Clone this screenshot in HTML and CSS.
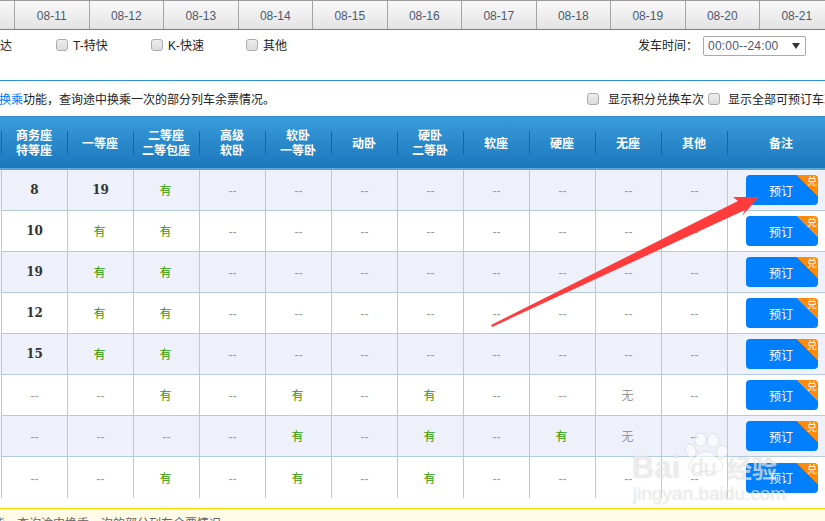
FILE: index.html
```html
<!DOCTYPE html>
<html lang="zh-CN">
<head>
<meta charset="utf-8">
<title>余票查询</title>
<link rel="stylesheet" href="styles.css">
</head>
<body>
<div class="page">
  <nav class="dates">
    <span class="date date-cut"></span>
    <span class="date">08-11</span><span class="date">08-12</span><span class="date">08-13</span><span class="date">08-14</span><span class="date">08-15</span><span class="date">08-16</span><span class="date">08-17</span><span class="date">08-18</span><span class="date">08-19</span><span class="date">08-20</span><span class="date">08-21</span>
  </nav>
  <section class="filters">
    <span class="filter-first">达</span>
    <label class="filter"><input type="checkbox" class="check">T-特快</label>
    <label class="filter"><input type="checkbox" class="check">K-快速</label>
    <label class="filter"><input type="checkbox" class="check">其他</label>
    <div class="time">
      <span>发车时间：</span>
      <div class="select">00:00--24:00<i class="caret"></i></div>
    </div>
  </section>
  <section class="notice">
    <p class="notice-text"><a class="link">换乘</a>功能，查询途中换乘一次的部分列车余票情况。</p>
    <label class="notice-opt"><input type="checkbox" class="check">显示积分兑换车次</label>
    <label class="notice-opt notice-opt-b"><input type="checkbox" class="check">显示全部可预订车次</label>
  </section>
  <table class="grid">
    <thead>
      <tr>
        <th class="cut"></th>
        <th>商务座<br>特等座</th><th>一等座</th><th>二等座<br>二等包座</th><th>高级<br>软卧</th><th>软卧<br>一等卧</th><th>动卧</th><th>硬卧<br>二等卧</th><th>软座</th><th>硬座</th><th>无座</th><th>其他</th><th class="last">备注</th>
      </tr>
    </thead>
    <tbody>
      <tr><td class="cut"></td><td class="num">8</td><td class="num">19</td><td class="yes">有</td><td>--</td><td>--</td><td>--</td><td>--</td><td>--</td><td>--</td><td>--</td><td>--</td><td class="last"><button class="book">预订<span class="tag">兑</span></button></td></tr>
      <tr><td class="cut"></td><td class="num">10</td><td class="yes">有</td><td class="yes">有</td><td>--</td><td>--</td><td>--</td><td>--</td><td>--</td><td>--</td><td>--</td><td>--</td><td class="last"><button class="book">预订<span class="tag">兑</span></button></td></tr>
      <tr><td class="cut"></td><td class="num">19</td><td class="yes">有</td><td class="yes">有</td><td>--</td><td>--</td><td>--</td><td>--</td><td>--</td><td>--</td><td>--</td><td>--</td><td class="last"><button class="book">预订<span class="tag">兑</span></button></td></tr>
      <tr><td class="cut"></td><td class="num">12</td><td class="yes">有</td><td class="yes">有</td><td>--</td><td>--</td><td>--</td><td>--</td><td>--</td><td>--</td><td>--</td><td>--</td><td class="last"><button class="book">预订<span class="tag">兑</span></button></td></tr>
      <tr><td class="cut"></td><td class="num">15</td><td class="yes">有</td><td class="yes">有</td><td>--</td><td>--</td><td>--</td><td>--</td><td>--</td><td>--</td><td>--</td><td>--</td><td class="last"><button class="book">预订<span class="tag">兑</span></button></td></tr>
      <tr><td class="cut"></td><td>--</td><td>--</td><td class="yes">有</td><td>--</td><td class="yes">有</td><td>--</td><td class="yes">有</td><td>--</td><td>--</td><td class="no">无</td><td>--</td><td class="last"><button class="book">预订<span class="tag">兑</span></button></td></tr>
      <tr><td class="cut"></td><td>--</td><td>--</td><td>--</td><td>--</td><td class="yes">有</td><td>--</td><td class="yes">有</td><td>--</td><td class="yes">有</td><td class="no">无</td><td>--</td><td class="last"><button class="book">预订<span class="tag">兑</span></button></td></tr>
      <tr><td class="cut"></td><td>--</td><td>--</td><td class="yes">有</td><td>--</td><td class="yes">有</td><td>--</td><td class="yes">有</td><td>--</td><td>--</td><td>--</td><td>--</td><td class="last"><button class="book">预订<span class="tag">兑</span></button></td></tr>
    </tbody>
  </table>
  <footer class="tip">功能，查询途中换乘一次的部分列车余票情况。</footer>

  <svg class="arrow" width="825" height="521" viewBox="0 0 825 521" aria-hidden="true">
    <polygon points="491,325 738,201 733,197 759,197 742,216 745,210 492,327" fill="#ff3b3b"/>
  </svg>

  <div class="mark" aria-hidden="true">
    <svg class="paw" width="46" height="42" viewBox="0 0 60 62" preserveAspectRatio="none">
      <g fill="#ffffff" fill-opacity=".6" stroke="#9a9a9a" stroke-opacity=".3" stroke-width="1">
        <ellipse cx="10" cy="26" rx="7" ry="10" transform="rotate(-12 10 26)"/>
        <ellipse cx="23" cy="10" rx="7.5" ry="10"/>
        <ellipse cx="39" cy="11" rx="7.5" ry="10"/>
        <ellipse cx="51" cy="28" rx="7" ry="10" transform="rotate(12 51 28)"/>
        <path d="M30 27c9 0 13 9 19 15 6 7 1 16-8 16-5 0-7-2-11-2s-7 2-12 2c-9 0-13-9-8-16 6-6 11-15 20-15z"/>
      </g>
    </svg>
    <span class="mark-bai">Bai</span>
    <span class="mark-du">du</span>
    <span class="mark-jy">经验</span>
    <span class="mark-url">jingyan.baidu.com</span>
  </div>
</div>
</body>
</html>
```
FILE: styles.css
```css
* { box-sizing: border-box; }
html, body { margin: 0; padding: 0; background: #fff; }
.page {
  position: relative;
  width: 825px;
  height: 521px;
  overflow: hidden;
  font: 12px/16px "Liberation Sans", "Noto Sans CJK SC", sans-serif;
  color: #333;
}

/* date tabs */
.dates {
  display: flex;
  height: 30px;
  border-top: 1px solid #999;
  border-bottom: 1px solid #3a92d0;
}
.date {
  flex: 0 0 74.5px;
  height: 28px;
  line-height: 30px;
  text-align: center;
  color: #4c5a70;
  border-right: 1px solid #a3a3a3;
  background: linear-gradient(#f9f9f9, #e3e3e3);
}
.date-cut { flex-basis: 15px; }

/* filters */
.filters {
  display: flex;
  height: 51px;
  padding-top: 8px;
  border-bottom: 1px solid #2b94d8;
  line-height: 16px;
  color: #222;
}
.filter-first { flex: 0 0 56px; }
.filter { flex: 0 0 95px; display: flex; align-items: flex-start; }
.check {
  appearance: none;
  flex: none;
  width: 12px;
  height: 12px;
  margin: 1px 5px 0 0;
  border: 1px solid #ababab;
  border-radius: 3px;
  background: linear-gradient(#ededed, #dcdcdc);
}
.time {
  display: flex;
  margin-left: 297px;
  gap: 5px;
}
.select {
  position: relative;
  width: 103px;
  height: 20px;
  margin-top: -2px;
  padding-left: 4px;
  border: 1px solid #a9a9a9;
  border-radius: 2px;
  line-height: 19px;
  letter-spacing: .2px;
  color: #4c5a70;
}
.caret {
  position: absolute;
  right: 5px;
  top: 6px;
  border: 4px solid transparent;
  border-top: 6px solid #333;
  border-bottom: 0;
}

/* notice */
.notice {
  display: flex;
  height: 35px;
  padding-top: 11px;
  color: #222;
}
.notice-text { margin: 0 0 0 -1px; flex: 0 0 588px; white-space: nowrap; }
.link { color: #0077ff; }
.notice-opt { display: flex; flex: 0 0 121px; align-items: flex-start; white-space: nowrap; }
.notice-opt .check { margin: 1px 9px 0 0; }
.notice-opt-b { flex: 0 0 200px; }
.notice-opt-b .check { margin-right: 8px; }

/* table */
.grid {
  width: 825px;
  table-layout: fixed;
  border-collapse: separate;
  border-spacing: 0;
}
.grid th, .grid td { width: 66px; padding: 0; text-align: center; }
.grid .cut { width: 1px; border: 0; background-image: none; }
.grid .last { width: 98px; }
.grid th {
  height: 54px;
  padding-top: 2px;
  font-weight: bold;
  line-height: 15px;
  color: #fff;
  background:
    linear-gradient(#2a5f9e, #2a5f9e) left center / 1px 24px no-repeat;
}
.grid th.last { padding-left: 10px; }
.grid thead tr {
  background: linear-gradient(#3a9ddb, #1a75bb);
  box-shadow: inset 0 -2px 0 #5aa6d8, inset 0 1px 0 #2f87c5;
}
.grid td {
  height: 41px;
  padding-top: 2px;
  border-left: 1px solid #b3cbda;
  border-bottom: 1px solid #b3cbda;
  color: #999;
}
.grid tbody tr:nth-child(odd) { background: #eef1f9; }
.grid tbody tr:last-child td { border-bottom: 0; }
.grid tbody .cut { border: 0; }
.grid .num {
  padding-top: 0;
  font: bold 12px "DejaVu Serif", "Liberation Serif", serif;
  color: #333;
}
.grid .yes { padding-right: 2px; color: #2b9c00; }
.grid .no { padding-right: 2px; color: #999; }
.grid td.last { padding: 0 0 0 18px; text-align: left; }
.book {
  position: relative;
  display: block;
  width: 72px;
  height: 30px;
  padding: 3px 2px 0 0;
  border: 0;
  border-radius: 4px;
  font: inherit;
  color: #fff;
  background: linear-gradient(225deg, #ff8a0a 15px, #0080ff 15px);
}
.tag {
  position: absolute;
  top: 1px;
  right: 1px;
  font-size: 10px;
  line-height: 12px;
  color: #ffe;
}

/* footer */
.tip {
  margin-top: 10px;
  height: 20px;
  padding: 7px 0 0 0;
  text-indent: -19px;
  border-top: 1px solid #ffd800;
  background: #fffbe6;
  color: #666;
  white-space: nowrap;
}

/* overlays */
.arrow { position: absolute; left: 0; top: 0; }
.mark {
  position: absolute;
  left: 625px;
  top: 425px;
  width: 200px;
  height: 96px;
}
.paw { position: absolute; left: 58px; top: 8px; }
.mark span {
  position: absolute;
  color: rgba(255,255,255,.6);
  text-shadow: 0 0 1px rgba(120,120,120,.35);
  white-space: nowrap;
}
.mark-bai { left: 7px; top: 26px; font: bold 31px/34px "Liberation Sans", sans-serif; }
.mark-du { left: 66px; top: 30px; font: 23px/26px "Liberation Sans", sans-serif; }
.mark-jy { left: 102px; top: 28px; font: bold 25px/28px "Noto Sans CJK SC", sans-serif; }
.mark-url { left: 8px; top: 58px; font: 19px/22px "Liberation Sans", sans-serif; }
```
